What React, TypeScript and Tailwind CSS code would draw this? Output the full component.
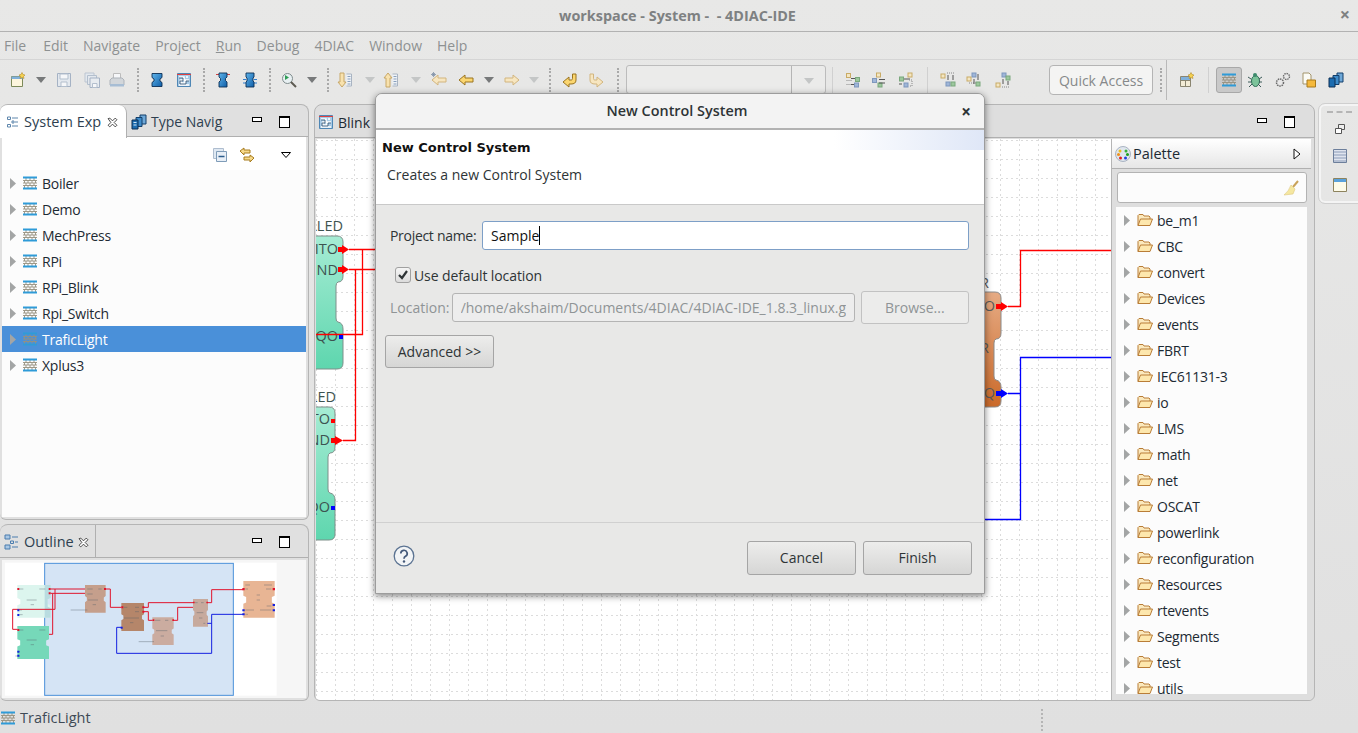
import type { ReactNode } from "react";

const SYSTEMS = ["Boiler", "Demo", "MechPress", "RPi", "RPi_Blink", "Rpi_Switch", "TraficLight", "Xplus3"];
const PALETTE = ["be_m1", "CBC", "convert", "Devices", "events", "FBRT", "IEC61131-3", "io", "LMS", "math", "net", "OSCAT", "powerlink", "reconfiguration", "Resources", "rtevents", "Segments", "test", "utils"];

function Ic({ children, className = "" }: { children: ReactNode; className?: string }) {
  return (
    <svg viewBox="0 0 16 16" className={`w-4 h-4 shrink-0 ${className}`} fill="none">
      {children}
    </svg>
  );
}

const Dd = ({ className = "", off = false }: { className?: string; off?: boolean }) => (
  <svg viewBox="0 0 10 6" className={`w-[10px] h-[6px] shrink-0 ${className}`}>
    <path d="M0 0h10L5 6z" fill={off ? "#c4c6c6" : "#77797a"} />
  </svg>
);

const Sep = ({ className = "" }: { className?: string }) => (
  <div className={`w-[2px] -mr-px h-[24px] shrink-0 border-l-2 border-dotted border-[#a9a9a9] ${className}`} />
);

const FbIcon = ({ className = "" }: { className?: string }) => (
  <Ic className={className}>
    <defs>
      <linearGradient id="fbg" x1="0" y1="0" x2="1" y2="1">
        <stop offset="0" stopColor="#5fb4ea" />
        <stop offset="1" stopColor="#0f5ea8" />
      </linearGradient>
    </defs>
    <path d="M3 1.500h10v4l-2 1.500v2l2 1.500v4H3v-4l2-1.500V7L3 5.500z" fill="url(#fbg)" stroke="#0c2f55" strokeWidth="0.900" />
  </Ic>
);

const SysIcon = ({ className = "" }: { className?: string }) => (
  <Ic className={className}>
    <path d="M1.500 1.500h13v13h-13z" fill="#a9cbe6" stroke="#4f87b5" />
    <path d="M1 2.500h14" stroke="#e04040" />
    <path d="M3 5h5v3H5v3h4V8h4M11 4v2M3 13h10" stroke="#fff" strokeWidth="1.600" />
    <path d="M3 6h4v3H4v3h6V9h3" stroke="#33506e" strokeWidth="0.800" />
  </Ic>
);

const NetIcon = ({ className = "" }: { className?: string }) => (
  <Ic className={className}>
    <path d="M1 5.500h14M1 8h14M1 10.500h14M4 3v2.500M8 3v2.500M12 3v2.500M2.500 5.500V8M6 5.500V8M10 5.500V8M13.500 5.500V8M4 8v2.500M8 8v2.500M12 8v2.500M2.500 10.500V13M6 10.500V13M10 10.500V13M13.500 10.500V13" stroke="#96917f" strokeWidth="0.900" />
    <path d="M1 1.500h14v2H1zM1 12.500h14v2H1z" fill="#2f9bd8" />
  </Ic>
);

const Folder = () => (
  <Ic className="ml-[7px]">
    <path d="M1 13.500V3.500l1-1h4l1 1.500h5l1 1v2" fill="#fbe9bd" stroke="#b97d37" />
    <path d="M1 13.500 3.500 7h12l-2.500 6.500z" fill="#fde7ad" stroke="#b97d37" />
  </Ic>
);

const Arrow = ({ dir, star, off }: { dir: "l" | "r"; star?: boolean; off?: boolean }) => (
  <Ic>
    <g transform={dir === "r" ? "matrix(-1 0 0 1 16 0)" : undefined}>
      <path d="M1 8 7 3v3h8v4H7v3z" fill={off ? "#f7e6c0" : "#fbd670"} stroke={off ? "#d2b57e" : "#9a7420"} />
    </g>
    {star && <path d="M1 1l3 3M4 1 1 4M2.500 0v5M0 2.500h5" stroke="#7d8fa6" strokeWidth="0.800" />}
  </Ic>
);

const DocArrow = ({ up }: { up?: boolean }) => (
  <Ic>
    <path d="M9.500 2h5v12h-5" stroke="#a9b4c2" fill="#eef2f6" />
    <path d="M10.500 4.500h3M10.500 7h3M10.500 9.500h3M10.500 12h3" stroke="#8aa0bd" />
    <path d={up ? "M5 1 1 6h2v9h4V6h2z" : "M3 1v9H1l4 5 4-5H7V1z"} fill="#f8e2ae" stroke="#c8a868" />
  </Ic>
);

const BlockTool = ({ v }: { v: number }) => (
  <Ic>
    {v === 0 && <><rect x="1.500" y="1.500" width="4" height="4" fill="#f3e6c3" stroke="#c9ab66" /><rect x="10.500" y="5.500" width="4" height="4" fill="#9cc79d" stroke="#7aa87c" /><rect x="9.500" y="11" width="4" height="4" fill="#9fb6d8" stroke="#7e97bd" /><path d="M1.500 8.500h5M1.500 12.500h5" stroke="#888" strokeDasharray="1 1" /><path d="M6 6.500h4M6 12.500h3" stroke="#555" /></>}
    {v === 1 && <><rect x="5.500" y="1" width="4" height="4" fill="#f3e6c3" stroke="#c9ab66" /><rect x="1.500" y="6.500" width="4" height="4" fill="#9fb6d8" stroke="#7e97bd" /><rect x="7" y="11" width="4" height="4" fill="#9cc79d" stroke="#7aa87c" /><path d="M8 7.500h6M8 11h6" stroke="#555" /></>}
    {v === 2 && <><rect x="10" y="1" width="4" height="4" fill="#f3e6c3" stroke="#c9ab66" /><rect x="1.500" y="5" width="4" height="4" fill="#9cc79d" stroke="#7aa87c" /><rect x="6" y="11" width="4" height="4" fill="#9fb6d8" stroke="#7e97bd" /><path d="M6 7h6M1 12h3" stroke="#555" /><path d="M11 8h3v6h-3" stroke="#888" strokeDasharray="1 1" /></>}
    {v === 3 && <><rect x="1" y="2" width="4" height="4" fill="#f3e6c3" stroke="#c9ab66" /><rect x="6" y="10" width="4" height="4" fill="#9fb6d8" stroke="#7e97bd" /><rect x="11" y="10" width="4" height="4" fill="#9cc79d" stroke="#7aa87c" /><path d="M7 1h8" stroke="#888" strokeDasharray="1 1" /><path d="M8 3v5M13 3v5" stroke="#555" /></>}
    {v === 4 && <><rect x="6" y="1" width="4" height="4" fill="#9fb6d8" stroke="#7e97bd" /><rect x="1" y="5" width="4" height="4" fill="#f3e6c3" stroke="#c9ab66" /><rect x="10" y="10" width="4" height="4" fill="#9cc79d" stroke="#7aa87c" /><path d="M3 11h8" stroke="#888" strokeDasharray="1 1" /><path d="M12 2v6M8 7v5" stroke="#555" /></>}
    {v === 5 && <><rect x="7" y="1" width="4" height="4" fill="#9fb6d8" stroke="#7e97bd" /><rect x="11" y="4" width="4" height="4" fill="#9cc79d" stroke="#7aa87c" /><rect x="1" y="11" width="4" height="4" fill="#f3e6c3" stroke="#c9ab66" /><path d="M7 15h8" stroke="#888" strokeDasharray="1 1" /><path d="M8 7v5M13 9v4" stroke="#555" /></>}
  </Ic>
);

const MinMax = ({ className = "" }: { className?: string }) => (
  <div className={`flex items-center ${className}`}>
    <div className="w-[10px] h-[5px] border border-black bg-white mb-[4px]" />
    <div className="w-[11px] h-[12px] border border-black border-t-[2px] bg-white ml-[17px]" />
  </div>
);

const CloseX = ({ className = "" }: { className?: string }) => (
  <svg viewBox="0 0 10 10" className={`w-[11px] h-[11px] shrink-0 ${className}`}>
    <path d="M1 1.500 2.500 1 5 3.500 7.500 1 9 2.500 6.500 5 9 7.500 7.500 9 5 6.500 2.500 9 1 7.500 3.500 5z" fill="#fff" stroke="#333" strokeWidth="0.800" />
  </svg>
);

const OutlineIc = ({ className = "" }: { className?: string }) => (
  <Ic className={className}>
    <path d="M1 1h5v4H1zM1 11h5v4H1z" fill="#a9c7e4" stroke="#4a7cae" />
    <path d="M6.500 7h3v2.500h-3z" stroke="#4a7cae" />
    <path d="M8 3h6M11 8h3M8 13h6" stroke="#4a7cae" />
  </Ic>
);

const TypeNavIc = () => (
  <Ic className="ml-[4px]">
    <path d="M9 1h6v9H9z" fill="#6ea8d8" stroke="#123e6a" />
    <path d="M5 3.500h6v9H5z" fill="#3e8ccb" stroke="#123e6a" />
    <path d="M1 6h6v9H1z" fill="#1c6cb0" stroke="#0c2f55" />
    <path d="M2.500 8.500h3M2.500 11h3" stroke="#cfe4f5" />
  </Ic>
);

const Expander = ({ className = "" }: { className?: string }) => (
  <svg viewBox="0 0 6 11" className={`w-[6px] h-[11px] shrink-0 ${className}`}>
    <path d="M0 0l6 5.500L0 11z" fill="#a3a5a5" />
  </svg>
);

function Toolbar() {
  return (
    <div className="h-[44px] flex items-center pl-[10px] pb-[4px] shrink-0">
      <Ic>
        <path d="M1.500 4.500h11v10h-11z" fill="#fdf6dd" stroke="#7d8a5a" />
        <path d="M1.500 4.500h11v2.500h-11z" fill="#7fb0dc" />
        <path d="M12 .5l1 2 2 .5-1.500 1.500.5 2-2-1-2 1 .5-2L9 3l2-.5z" fill="#f6d250" stroke="#b48c2a" strokeWidth="0.600" />
      </Ic>
      <Dd className="ml-[10px]" />
      <Ic className="ml-[10px]">
        <path d="M1.500 1.500h13v13h-13z" fill="#e3e8ee" stroke="#a5b2c4" />
        <path d="M4 2h8v5H4zM5 10h6v4.500H5z" fill="#f6f7f9" stroke="#b3bfcd" />
      </Ic>
      <Ic className="ml-[12px]">
        <path d="M1 1h9v9H1z" fill="#e3e8ee" stroke="#bcc5d1" />
        <path d="M3.500 3.500h9v9h-9z" fill="#e3e8ee" stroke="#b3bfcd" />
        <path d="M6 6h9.500v9.500H6z" fill="#e8ecf0" stroke="#a5b2c4" />
        <path d="M8.500 11.500h4.500v4H8.500z" fill="#f6f7f9" stroke="#b3bfcd" />
      </Ic>
      <Ic className="ml-[9px]">
        <path d="M4.500 1.500h7v6h-7z" fill="#f6f7f9" stroke="#bcbcbc" />
        <path d="M1 8l2-2h10l2 2v5H1z" fill="#d2d6da" stroke="#adb3ba" />
        <path d="M1 12h14v2.500H1z" fill="#a7bdd4" />
      </Ic>
      <Sep className="ml-[12px]" />
      <FbIcon className="ml-[11px]" />
      <SysIcon className="ml-[11px]" />
      <Sep className="ml-[11px]" />
      <Ic className="ml-[11px]">
        <path d="M1 2.500h3M12 2.500h3" stroke="#d04040" />
        <path d="M4 1h8v4l-1.500 1.500v2L12 10v5H4v-5l1.500-1.500v-2L4 5z" fill="url(#fbg)" stroke="#0c2f55" strokeWidth="0.900" />
      </Ic>
      <Ic className="ml-[11px]">
        <path d="M1 7.500h3M1 11h3M12 7.500h3M12 11h3" stroke="#2f7fd0" />
        <path d="M4 1h8v4l-1 1v3l1 1v5H4v-5l1-1V6L4 5z" fill="url(#fbg)" stroke="#0c2f55" strokeWidth="0.900" />
      </Ic>
      <Sep className="ml-[11px]" />
      <Ic className="ml-[11px]">
        <circle cx="6.500" cy="6.500" r="5" fill="#e8f0f2" stroke="#7f8c8d" />
        <path d="M4 3l4 2.500L4 8z" fill="#2f9d55" />
        <path d="M10 10l5 5" stroke="#5d5a52" strokeWidth="2" />
      </Ic>
      <Dd className="ml-[10px]" />
      <Sep className="ml-[10px]" />
      <div className="ml-[9px]"><DocArrow /></div>
      <Dd off className="ml-[12px]" />
      <div className="ml-[8px]"><DocArrow up /></div>
      <Dd off className="ml-[12px]" />
      <div className="ml-[10px]"><Arrow dir="l" star off /></div>
      <div className="ml-[11px]"><Arrow dir="l" /></div>
      <Dd className="ml-[10px]" />
      <div className="ml-[10px]"><Arrow dir="r" off /></div>
      <Dd off className="ml-[9px]" />
      <Sep className="ml-[10px]" />
      <Ic className="ml-[12px]">
        <path d="M14 2v6c0 3-2 4-5 4H7v3L1 10l6-5v3h2c1 0 1.500-.5 1.500-1.500V2z" fill="#fbd670" stroke="#9a7420" />
      </Ic>
      <Ic className="ml-[10px]">
        <path d="M2 2v6c0 3 2 4 5 4h2v3l6-5-6-5v3H7C6 8 5.500 7.500 5.500 6.500V2z" fill="#f7e6c0" stroke="#d2b57e" />
      </Ic>
      <Sep className="ml-[13px]" />
      <div className="ml-[8px] w-[200px] h-[29px] self-start mt-[5px] flex rounded-[3px] border border-[#bcbcbc] bg-[#ebebea] shrink-0">
        <div className="flex-1 border-r border-[#b5b5b5]" />
        <div className="w-[33px] flex items-center justify-center pt-[2px]"><Dd off /></div>
      </div>
      <div className="ml-[6px] w-px h-[26px] bg-[#d0d0d0] shrink-0" />
      <div className="ml-[12px]"><BlockTool v={0} /></div>
      <div className="ml-[10px]"><BlockTool v={1} /></div>
      <div className="ml-[11px]"><BlockTool v={2} /></div>
      <div className="ml-[13px] w-px h-[26px] bg-[#d0d0d0] shrink-0" />
      <div className="ml-[12px]"><BlockTool v={3} /></div>
      <div className="ml-[10px]"><BlockTool v={4} /></div>
      <div className="ml-[13px]"><BlockTool v={5} /></div>
      <div className="ml-[38px] w-[104px] h-[30px] shrink-0 rounded-[4px] border border-[#b4b4b4] bg-[#f4f4f3] flex items-center justify-center text-[14px] text-[#86898a]">Quick Access</div>
      <Sep className="ml-[7px]" />
      <div className="ml-[5px] w-px h-[40px] bg-[#b9b9b9] shrink-0" />
      <Ic className="ml-[12px]">
        <path d="M1.500 4.500h10v10h-10z" fill="#f3ecd6" stroke="#8a8570" />
        <path d="M1.500 8.500h10M6.500 4.500v10" stroke="#8a8570" />
        <path d="M2 5h9v3H2z" fill="#7fb0dc" />
        <path d="M12 .5l1 2 2 .5-1.500 1.500.5 2-2-1-2 1 .5-2L9 3l2-.5z" fill="#f6d250" stroke="#b48c2a" strokeWidth="0.600" />
      </Ic>
      <div className="ml-[13px] w-px h-[26px] bg-[#d0d0d0] shrink-0" />
      <div className="ml-[7px] w-[26px] h-[26px] rounded-[3px] border border-[#a8a8a8] bg-[#c9c9c9] flex items-center justify-center shrink-0">
        <NetIcon />
      </div>
      <Ic className="ml-[5px]">
        <ellipse cx="8.500" cy="9" rx="4" ry="5.500" fill="#7cc39a" stroke="#2f6e56" />
        <circle cx="8" cy="3" r="2" fill="#3d8a6c" />
        <path d="M1 5l3 2M1 10h3M2 15l3-3M15 5l-3 2M15 10h-3M14 15l-3-3" stroke="#3b5a58" />
      </Ic>
      <Ic className="ml-[12px]">
        <circle cx="5" cy="10.500" r="3.500" fill="#e8e8e8" stroke="#6a6a6a" strokeWidth="1.500" strokeDasharray="1.500 .8" />
        <circle cx="11.500" cy="4.500" r="3" fill="#e8e8e8" stroke="#6a6a6a" strokeWidth="1.400" strokeDasharray="1.500 .8" />
      </Ic>
      <Ic className="ml-[10px]">
        <path d="M2 1h6l2 2v9H2z" fill="#fbfbf5" stroke="#a4956c" />
        <path d="M6 8h8.500v7H6z" fill="#f5b93c" stroke="#a87a1c" />
      </Ic>
      <Ic className="ml-[11px]">
        <path d="M9 1h6v9H9z" fill="#6ea8d8" stroke="#123e6a" />
        <path d="M5 3.500h6v9H5z" fill="#3e8ccb" stroke="#123e6a" />
        <path d="M1 6h6v9H1z" fill="#1c6cb0" stroke="#0c2f55" />
      </Ic>
    </div>
  );
}

function LeftPanels() {
  return (
    <div className="w-[309px] flex flex-col gap-[4px] shrink-0">
      <div className="h-[416px] flex flex-col rounded-t-[8px] rounded-b-[6px] border border-l-0 border-[#b5b5b5] bg-[#e0e0e0] overflow-hidden">
        <div className="h-[32px] flex items-center shrink-0 border-b border-[#b0b0b0] text-[#2e3f50] pt-[2px]">
          <div className="h-[33px] w-[127px] -mt-[2px] -mb-px flex items-center pt-[2px] pl-[7px] bg-white border-r border-[#b0b0b0] rounded-tr-[8px] shrink-0 relative">
            <svg viewBox="0 0 12 12" className="w-3 h-3 shrink-0">
              <path d="M.5 1h3v2.500h-3zM.5 8.500h3V11h-3zM5 5h2v2H5z" fill="none" stroke="#5f87ad" />
              <path d="M5 2h6M8 6h3M5 10h6" stroke="#5f87ad" />
            </svg>
            <span className="ml-[5px] text-[14.500px]">System Exp</span>
            <CloseX className="ml-auto mr-[8px]" />
          </div>
          <TypeNavIc />
          <span className="ml-[4px] text-[14px]">Type Navig</span>
          <MinMax className="ml-auto mr-[18px]" />
        </div>
        <div className="flex-1 bg-white mx-[2px] mb-[2px] flex flex-col">
          <div className="h-[33px] shrink-0 flex items-center pt-[2px]">
            <svg viewBox="0 0 14 14" className="w-[14px] h-[14px] ml-[211px] shrink-0">
              <path d="M.5.5h10v10H.5z" fill="#dfe8f2" stroke="#aebdcf" />
              <path d="M3.500 3.500h10v10h-10z" fill="#e8eff7" stroke="#7f9cb8" />
              <path d="M5.500 8.500h6" stroke="#2c5d8c" strokeWidth="1.500" />
            </svg>
            <svg viewBox="0 0 16 16" className="w-4 h-4 ml-[12px] shrink-0">
              <path d="M1 4l4-3v2h6v3H5v2zM15 11l-4-3v2H5v3h6v2z" fill="#f6d98a" stroke="#a87c1e" />
            </svg>
            <svg viewBox="0 0 10 6" className="w-[10px] h-[6px] ml-[26px] shrink-0">
              <path d="M.5.5h9L5 5.500z" fill="#fff" stroke="#000" />
            </svg>
          </div>
          <div className="flex-1 bg-[#fcfcfc] text-[14px] tracking-[-0.25px] text-[#1d2a33] overflow-hidden">
            {SYSTEMS.map((name) => (
              <div key={name} className={`h-[26px] flex items-center pl-[8px] ${name === "TraficLight" ? "bg-[#4a90d9] text-white" : ""}`}>
                <Expander />
                <NetIcon className="ml-[6px]" />
                <span className="ml-[4px]">{name}</span>
              </div>
            ))}
          </div>
        </div>
      </div>
      <div className="h-[177px] flex flex-col rounded-t-[8px] rounded-b-[6px] border border-l-0 border-[#b5b5b5] bg-[#e0e0e0] overflow-hidden">
        <div className="h-[33px] flex items-center shrink-0 border-b border-[#b0b0b0] text-[#2e3f50] pt-[2px]">
          <div className="h-[33px] -mt-[2px] w-[96px] flex items-center pt-[2px] pl-[4px] border-r border-[#b0b0b0] shrink-0">
            <OutlineIc />
            <span className="ml-[4px] text-[14.500px]">Outline</span>
            <CloseX className="ml-auto mr-[6px]" />
          </div>
          <MinMax className="ml-auto mr-[18px]" />
        </div>
        <div className="flex-1 mx-[2px] mb-[2px] mt-[2px] bg-[#f6f6f6] overflow-hidden">
          <Minimap />
        </div>
      </div>
    </div>
  );
}

// function block outline, head and foot joined by a narrower neck
const fb = (x: number, y: number, w: number, h: number) => {
  const n = w * 0.09;
  const top = y + h * 0.4;
  const bot = y + h * 0.62;
  return `M${x} ${y}H${x + w}V${top}L${x + w - n} ${top + 4}V${bot - 4}L${x + w} ${bot}V${y + h}H${x}V${bot}L${x + n} ${bot - 4}V${top + 4}L${x} ${top}Z`;
};

function Minimap() {
  const red = "M152 207H255M152 220H255M165 207V268H38V328H52M158 220V343H147M317 207H331V262H364M430 262H445V248H579M430 275H445V301H458M520 301H533V262H579M622 248H635V209H730";
  const blue = "M365 322H350V400H635V283H730M622 310H635";
  const ticks = "M58 207h12M118 207h18M58 270h8M58 284h10M58 330h12M118 330h18M60 395h-8M60 408h-14M80 240h30M92 254h10M80 360h30M92 374h10M262 207h16M295 207h10M262 222h16M264 240h30M278 254h10M262 270h-50M372 262h10M405 262h12M405 275h12M372 294h45M390 308h10M465 301h16M495 301h10M468 332h34M482 348h10M462 365h-46M585 248h8M603 248h8M590 278h20M597 294h10M610 310h6M736 195h14M792 195h24M736 207h8M798 207h16M770 225h10M770 240h10M736 270h26M780 270h34M736 283h8M800 258h14";
  return (
    <svg viewBox="6 120 912 417" className="w-[304px] h-[139px] block blur-[0.4px]">
      <rect x="15" y="128" width="815" height="399" fill="#fff" />
      <rect x="134" y="130" width="566" height="396" fill="#d5e4f5" stroke="#4a90d9" strokeWidth="3" />
      <path d={fb(52, 195, 100, 98)} fill="#dcf5ee" />
      <path d="M134 195h18v39l-9 4v22l9 4v29h-18z" fill="#b9dce0" />
      <path d={fb(52, 318, 95, 99)} fill="#76d8b9" />
      <path d={fb(255, 195, 62, 83)} fill="#c59f8c" />
      <path d={fb(364, 249, 68, 84)} fill="#b5866a" />
      <path d={fb(457, 292, 64, 83)} fill="#cbaca0" />
      <path d={fb(579, 237, 45, 83)} fill="#c7aa9d" />
      <path d={fb(730, 183, 94, 110)} fill="#e8b594" />
      <path d={ticks} stroke="#55606a" strokeWidth="3" opacity="0.4" fill="none" />
      <path d={red} stroke="#e0142c" strokeWidth="3" fill="none" />
      <path d={blue} stroke="#1420e0" strokeWidth="3" fill="none" />
      <path d="M52 204h6v6h-6zM52 327h6v6h-6zM146 204h6v6h-6zM146 217h6v6h-6zM312 204h6v6h-6zM364 259h6v6h-6zM427 259h6v6h-6zM427 272h6v6h-6zM458 298h5v5h-5zM517 298h5v5h-5zM579 245h5v5h-5zM619 245h5v5h-5zM727 204h7v7h-7zM818 204h7v7h-7z" fill="#e0142c" />
      <path d="M52 268h6v6h-6zM52 282h6v6h-6zM52 392h6v6h-6zM52 404h6v6h-6zM362 320h6v6h-6zM727 268h7v6h-7zM727 280h7v6h-7zM818 268h7v6h-7zM818 252h7v6h-7z" fill="#1420e0" />
    </svg>
  );
}

function Diagram() {
  const gridV = Array.from({ length: 43 }, (_, i) => 316 + i * 19);
  const gridH = Array.from({ length: 30 }, (_, i) => 140 + i * 19);
  return (
    <svg viewBox="316 139 795 561" className="w-[795px] h-[561px] block bg-white">
      <defs>
        <linearGradient id="teal" x1="0" y1="0" x2="0" y2="1">
          <stop offset="0" stopColor="#a6ecd4" />
          <stop offset="1" stopColor="#5ed6ae" />
        </linearGradient>
        <linearGradient id="orange" x1="0" y1="0" x2="0" y2="1">
          <stop offset="0" stopColor="#e6ab84" />
          <stop offset="1" stopColor="#cb6a2a" />
        </linearGradient>
      </defs>
      {gridV.map((x) => (
        <path key={x} d={`M${x + 0.5} 139V700`} stroke="#dcdcdc" strokeDasharray="2 3" />
      ))}
      {gridH.map((y) => (
        <path key={y} d={`M316 ${y + 0.5}H1111`} stroke="#dcdcdc" strokeDasharray="2 3" />
      ))}
      <path d="M300 236H337Q343 236 343 242V276Q343 282 338 282Q336 283 336 286V318Q336 322 338 322Q343 323 343 329V363Q343 369 337 369H300Z" fill="url(#teal)" stroke="#7f8f8a" />
      <path d="M300 407H329Q335 407 335 413V447Q335 453 330 453Q328 454 328 457V489Q328 493 330 493Q335 494 335 500V534Q335 540 329 540H300Z" fill="url(#teal)" stroke="#7f8f8a" />
      <path d="M960 292H995Q1001 292 1001 298V333Q1001 339 996 339Q994 340 994 343V376Q994 380 996 380Q1001 381 1001 387V401Q1001 407 995 407H960Z" fill="url(#orange)" stroke="#8a8a8a" />
      <g fontSize="14.500" fill="#3d5350" textAnchor="end">
        <text x="343" y="231">ALLED</text>
        <text x="338" y="254">INITO</text>
        <text x="338" y="275">IND</text>
        <text x="338" y="341">IQO</text>
        <text x="336" y="402">ALLED</text>
        <text x="330" y="424">INITO</text>
        <text x="330" y="445">IND</text>
        <text x="330" y="512">IQO</text>
        <text x="989" y="288" fill="#5a5a5a">R</text>
        <text x="995" y="311" fill="#5a5a5a">O</text>
        <text x="989" y="353" fill="#5a5a5a">R</text>
        <text x="995" y="398" fill="#5a5a5a">Q</text>
      </g>
      <path d="M349 249.500H380M362.500 249.500V334.500H316M349 269.500H380M355.500 269.500V440.500H343" stroke="#f00" strokeWidth="1.300" fill="none" />
      <path d="M1008 306.500H1020.500V250.500H1111" stroke="#f00" strokeWidth="1.300" fill="none" />
      <path d="M1008 393.500H1020.500V519.500H980M1020.500 393.500V357.500H1111" stroke="#00f" strokeWidth="1.300" fill="none" />
      <path d="M338 247h4v-2l7 4.500-7 4.500v-2h-4zM338 267h4v-2l7 4.500-7 4.500v-2h-4zM331 438h4v-2l8 4.500-8 4.500v-2h-4zM331 419h4v4h-4zM996 304h5v-2l7 4.500-7 4.500v-2h-5z" fill="#f00" />
      <path d="M339 335h4v4h-4zM331 506h4v4h-4zM996 391h5v-2l7 4.500-7 4.500v-2h-5z" fill="#00f" />
    </svg>
  );
}

function EditorPanel() {
  return (
    <div className="ml-[5px] w-[1001px] h-[597px] flex flex-col rounded-t-[8px] rounded-b-[6px] border border-[#b5b5b5] bg-[#dedede] overflow-hidden shrink-0">
      <div className="h-[33px] flex items-center shrink-0 border-b border-[#b0b0b0] pl-[3px] pt-[2px] text-[#1d2a33]">
        <SysIcon />
        <span className="ml-[4px] text-[14px]">Blink</span>
        <MinMax className="ml-auto mr-[19px]" />
      </div>
      <div className="flex-1 flex min-h-0 pl-px pt-[1px]">
        <div className="w-[795px] overflow-hidden"><Diagram /></div>
        <div className="w-[200px] flex flex-col border-l border-[#b5b5b5] bg-[#dedede]">
          <div className="h-[30px] shrink-0 flex items-center pl-[3px] bg-gradient-to-b from-[#ffffff] to-[#e6e6e6] border-b border-[#b0b0b0]">
            <svg viewBox="0 0 16 16" className="w-4 h-4 shrink-0">
              <circle cx="8" cy="8" r="7.500" fill="#dfe6ee" stroke="#a9b3c2" />
              <circle cx="5" cy="5" r="1.500" fill="#e8c020" /><circle cx="11" cy="5" r="1.500" fill="#3ab03a" />
              <circle cx="3.500" cy="8.500" r="1.500" fill="#f0901c" /><circle cx="12.500" cy="8.500" r="1.500" fill="#20a020" />
              <circle cx="5.500" cy="12" r="1.500" fill="#e02020" /><circle cx="10.500" cy="12" r="1.500" fill="#2040e0" />
            </svg>
            <span className="ml-[2px] text-[14.500px] text-[#1d2a33]">Palette</span>
            <svg viewBox="0 0 8 12" className="w-2 h-3 ml-auto mr-[10px] shrink-0"><path d="M1 1l6 5-6 5z" fill="#fff" stroke="#111" /></svg>
          </div>
          <div className="ml-[5px] mt-[3px] h-[31px] shrink-0 w-[190px] rounded-[3px] border border-[#b3b3b3] bg-[#fcfcfc] flex items-center justify-end pr-[7px]">
            <svg viewBox="0 0 16 16" className="w-4 h-4">
              <path d="M15 1l-5 6" stroke="#c9a35a" strokeWidth="2" />
              <path d="M8 5l4 4-2 5-9 1q5-4 7-10z" fill="#f5e7a0" stroke="#ddc87e" strokeWidth="0.600" />
            </svg>
          </div>
          <div className="ml-[4px] mt-[4px] mb-[6px] flex-1 w-[191px] bg-[#fcfcfc] overflow-hidden text-[14px] tracking-[-0.25px] text-[#1d2a33]">
            {PALETTE.map((name) => (
              <div key={name} className="h-[26px] flex items-center pl-[8px]">
                <Expander />
                <Folder />
                <span className="ml-[4px]">{name}</span>
              </div>
            ))}
          </div>
        </div>
      </div>
    </div>
  );
}

function Dialog() {
  return (
    <div className="absolute left-[375px] top-[93px] w-[610px] h-[501px] z-10 flex flex-col rounded-t-[7px] border border-[#9c9c9c] bg-[#e8e8e7] shadow-[0_2px_7px_rgba(0,0,0,0.5)] text-[#2e3436] overflow-hidden">
      <div className="h-[36px] shrink-0 flex items-center justify-center relative bg-[#f3f3f3] border-b-2 border-[#b2b2b2] pr-[6px]">
        <span className="text-[14.400px] font-semibold">New Control System</span>
        <span className="absolute right-[13px] top-[8px] text-[17px] font-bold leading-[20px]">×</span>
      </div>
      <div className="h-[75px] shrink-0 relative bg-white border-b border-[#c9c9c9] pl-[6px]">
        <div className="absolute right-0 top-0 w-[150px] h-[20px] bg-gradient-to-r from-white to-[#dfe7f7]" />
        <div className="relative pt-[9px] font-['DejaVu_Sans'] font-bold text-[13px] text-[#111] leading-[18px]">New Control System</div>
        <div className="pl-[5px] pt-[8px] text-[14px] leading-[20px]">Creates a new Control System</div>
      </div>
      <div className="flex-1 flex flex-col pt-[16px] pl-[9px] pr-[15px] text-[14px]">
        <div className="flex items-center h-[29px] shrink-0">
          <span className="ml-[5px] w-[92px] tracking-[-0.3px]">Project name:</span>
          <div className="flex-1 h-[29px] rounded-[3px] border border-[#7d9fc7] bg-white flex items-center pl-[8px] text-[#111]">
            <span>Sample</span>
            <span className="w-px h-[19px] bg-black" />
          </div>
        </div>
        <div className="flex items-center mt-[17px] h-[16px] shrink-0 ml-[10px]">
          <div className="w-[16px] h-[16px] rounded-[3px] border border-[#a0a0a0] bg-gradient-to-b from-[#f5f5f5] to-[#dcdcdc] flex items-center justify-center shrink-0">
            <svg viewBox="0 0 12 12" className="w-3 h-3"><path d="M2 6l3 3 5-7" stroke="#2e3436" strokeWidth="2.200" fill="none" /></svg>
          </div>
          <span className="ml-[3px] tracking-[-0.1px]">Use default location</span>
        </div>
        <div className="flex items-center mt-[8px] h-[33px] shrink-0 text-[#8f9496]">
          <span className="ml-[5px] w-[62px]">Location:</span>
          <div className="w-[403px] h-[29px] rounded-[3px] border border-[#b4b4b4] bg-[#ededed] flex items-center pl-[8px] pr-[8px]">
            <div className="flex-1 overflow-hidden whitespace-nowrap">/home/akshaim/Documents/4DIAC/4DIAC-IDE_1.8.3_linux.gt</div>
          </div>
          <div className="ml-[6px] w-[109px] h-[33px] rounded-[3px] border border-[#c2c2c2] bg-[#ececeb] flex items-center justify-center">Browse...</div>
        </div>
        <div className="mt-[11px] w-[109px] h-[33px] shrink-0 rounded-[3px] border border-[#a5a5a5] bg-gradient-to-b from-[#ededec] to-[#d6d6d5] flex items-center justify-center">Advanced &gt;&gt;</div>
      </div>
      <div className="h-[71px] shrink-0 border-t border-[#d0d0d0] flex items-center pl-[17px] pr-[12px] text-[14px]">
        <svg viewBox="0 0 22 22" className="w-[22px] h-[22px] shrink-0 mb-[4px]">
          <circle cx="11" cy="11" r="9.800" fill="#f2f4f6" stroke="#5b7392" strokeWidth="1.300" />
          <path d="M7.800 8.500a3.200 3.200 0 1 1 4.700 2.800c-1 .6-1.500 1-1.500 2.400" stroke="#44597a" strokeWidth="1.700" fill="none" />
          <circle cx="11" cy="16.500" r="1.200" fill="#44597a" />
        </svg>
        <div className="ml-auto w-[109px] h-[34px] rounded-[3px] border border-[#a5a5a5] bg-gradient-to-b from-[#ededec] to-[#d6d6d5] flex items-center justify-center pb-[2px]">Cancel</div>
        <div className="ml-[7px] w-[109px] h-[34px] rounded-[3px] border border-[#a5a5a5] bg-gradient-to-b from-[#ededec] to-[#d6d6d5] flex items-center justify-center pb-[2px]">Finish</div>
      </div>
    </div>
  );
}

export default function App() {
  return (
    <div className="relative w-[1358px] h-[733px] overflow-hidden flex flex-col bg-gradient-to-b from-[#e8e8e7] to-[#e0e0e0] font-['Open_Sans',sans-serif]">
      <div className="h-[32px] shrink-0 relative flex items-center justify-center border-b border-[#b2b2b2] text-[14.400px] font-bold text-[#7e8182] whitespace-pre pr-[3px]">
        workspace - System -  - 4DIAC-IDE
        <span className="absolute right-[8px] top-[4px] text-[18px] leading-[20px] font-bold">×</span>
      </div>
      <div className="h-[28px] shrink-0 flex items-center pl-[4px] border-b border-[#d5d5d5] text-[14px] text-[#8e9192]">
        <span>File</span>
        <span className="ml-[17px]">Edit</span>
        <span className="ml-[15px]">Navigate</span>
        <span className="ml-[15px]">Project</span>
        <span className="ml-[15px]"><span className="underline">R</span>un</span>
        <span className="ml-[15px]">Debug</span>
        <span className="ml-[15px]">4DIAC</span>
        <span className="ml-[15px]">Window</span>
        <span className="ml-[15px]">Help</span>
      </div>
      <Toolbar />
      <div className="h-[597px] shrink-0 flex">
        <LeftPanels />
        <EditorPanel />
        <div className="ml-[4px] w-[39px] h-[99px] rounded-l-[6px] border-l-2 border-b-2 border-t-2 border-[#f4f4f4] flex flex-col items-center pt-[5px] shrink-0 outline outline-1 outline-[#cfcfcf]">
          <div className="w-[25px] border-t-2 border-dashed border-[#b5b5b5]" />
          <svg viewBox="0 0 12 12" className="w-3 h-3 mt-[10px]"><path d="M4.500 1.500h6v5h-6z" fill="#eee" stroke="#555" /><path d="M1.500 5.500h6v5h-6z" fill="#fff" stroke="#555" /></svg>
          <svg viewBox="0 0 14 14" className="w-[14px] h-[14px] mt-[14px]"><path d="M.5.5h13v13H.5z" fill="#dfe4ee" stroke="#6d7f9b" /><path d="M.5 3h13M1 6h12M1 9h12M1 12h12" stroke="#8c9cb8" /></svg>
          <svg viewBox="0 0 14 14" className="w-[14px] h-[14px] mt-[15px]"><path d="M.5.5h13v13H.5z" fill="#fdfbe9" stroke="#8d835e" /><path d="M1 1h12v3H1z" fill="#5aa2dc" /></svg>
        </div>
      </div>
      <div className="flex-1 flex items-center pt-[2px] text-[14.500px] text-[#3e4a56] relative">
        <NetIcon />
        <span className="ml-[4px]">TraficLight</span>
        <div className="absolute left-[1041px] top-[8px] h-[22px] border-l-2 border-dotted border-[#b5b5b5]" />
      </div>
      <Dialog />
    </div>
  );
}
